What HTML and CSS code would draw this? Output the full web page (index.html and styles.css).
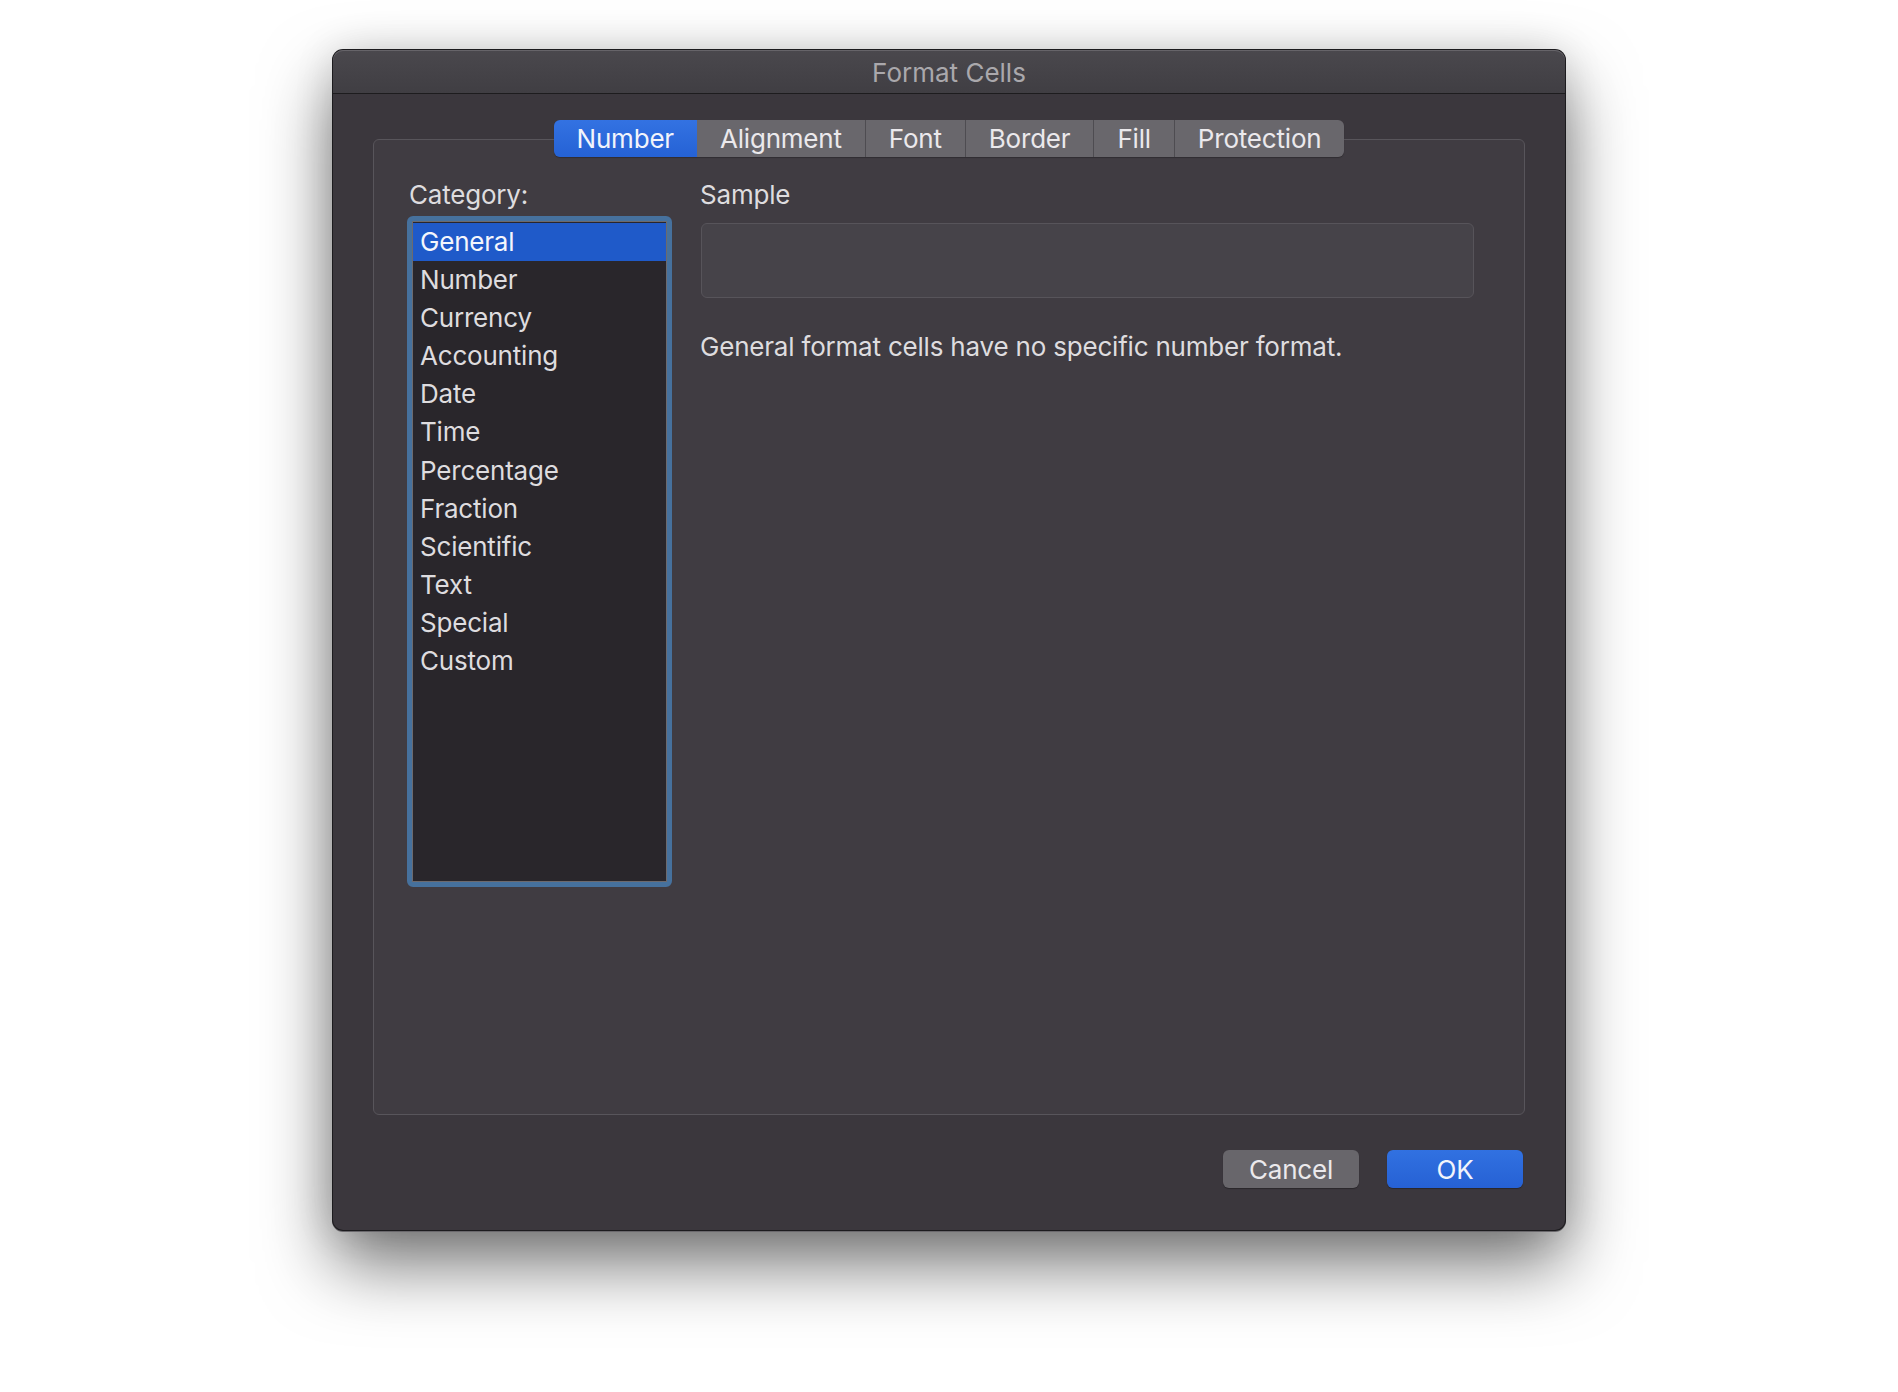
FILE: index.html
```html
<!DOCTYPE html>
<html lang="en">
<head>
    <meta charset="UTF-8">
    <title>Format Cells</title>
    <link rel="stylesheet" href="styles.css">
</head>
<body>
    <div class="window">
        <div class="titlebar">Format Cells</div>

        <div class="window-body">
            <div class="tabbar">
                <div class="tab active">Number</div>
                <div class="tab">Alignment</div>
                <div class="tab">Font</div>
                <div class="tab">Border</div>
                <div class="tab">Fill</div>
                <div class="tab">Protection</div>
            </div>

            <div class="group">
                <div class="col-left">
                    <div class="label">Category:</div>
                    <div class="list-frame">
                        <ul class="list">
                            <li class="selected">General</li>
                            <li>Number</li>
                            <li>Currency</li>
                            <li>Accounting</li>
                            <li>Date</li>
                            <li>Time</li>
                            <li>Percentage</li>
                            <li>Fraction</li>
                            <li>Scientific</li>
                            <li>Text</li>
                            <li>Special</li>
                            <li>Custom</li>
                        </ul>
                    </div>
                </div>

                <div class="col-right">
                    <div class="label">Sample</div>
                    <div class="sample"></div>
                    <p class="description">General format cells have no specific number format.</p>
                </div>
            </div>

            <div class="buttons">
                <button class="btn">Cancel</button>
                <button class="btn primary">OK</button>
            </div>
        </div>
    </div>
</body>
</html>
```

FILE: styles.css
```css
html, body {
    margin: 0;
    padding: 0;
}
body {
    background: #ffffff;
    font-family: Inter, "Noto Sans", sans-serif;
    font-size: 26px;
    letter-spacing: -0.2px;
    color: #dedcdf;
    width: 1898px;
    height: 1392px;
    overflow: hidden;
}
.window {
    width: 1232px;
    height: 1180px;
    margin: 50px auto 0;
    background: #3b373d;
    border-radius: 10px;
    box-shadow: 0 0 0 1px #1c1b1e, 0 1px 0 1px #6a686c, 0 34px 70px rgba(0,0,0,0.55), 0 0 40px rgba(0,0,0,0.12);
    display: flex;
    flex-direction: column;
    box-sizing: border-box;
}
.titlebar {
    height: 43px;
    line-height: 45px;
    text-align: center;
    font-size: 26px;
    letter-spacing: 0;
    color: #aaa8ac;
    background: linear-gradient(#4a484d, #403e43);
    border-bottom: 1px solid #1d1c1e;
    border-radius: 10px 10px 0 0;
    box-shadow: inset 0 1px 0 #666469;
}
.window-body {
    flex: 1;
    padding: 26px 40px 0;
    display: flex;
    flex-direction: column;
}
.tabbar {
    align-self: center;
    display: flex;
    height: 37px;
    position: relative;
    z-index: 1;
    border-radius: 6px;
    box-shadow: 0 1px 1px rgba(0,0,0,0.25);
}
.tab {
    padding: 0 23px;
    line-height: 37px;
    color: #ebe9ec;
    background: #69676c;
    border-left: 1px solid #4e4c51;
}
.tab:first-child {
    border-left: none;
    border-radius: 6px 0 0 6px;
}
.tab:last-child {
    border-radius: 0 6px 6px 0;
}
.tab.active {
    background: linear-gradient(#3372e2, #2562d5);
    color: #f2f4fb;
}
.tab.active + .tab {
    border-left: none;
}
.group {
    margin-top: -18px;
    height: 976px;
    box-sizing: border-box;
    border: 1px solid #58555b;
    border-radius: 6px;
    background: #403c42;
    padding: 39px 50px 0 35px;
    display: flex;
    gap: 28px;
}
.label {
    line-height: 32px;
    color: #dedcdf;
}
.col-left .label {
    margin-bottom: 5px;
}
.list-frame {
    width: 265px;
    height: 671px;
    margin-left: -2px;
    box-sizing: border-box;
    border: 5px solid #46719d;
    border-radius: 6px;
}
.list {
    list-style: none;
    margin: 0;
    padding: 1px 0 0;
    height: 100%;
    box-sizing: border-box;
    border: 1px solid #6c6a6e;
    background: #29262b;
}
.list li {
    height: 38.1px;
    line-height: 38.1px;
    padding-left: 7px;
    color: #dedcdf;
}
.list li.selected {
    background: #1f5ac9;
    color: #f4f6fc;
}
.col-right {
    flex: 1;
}
.sample {
    margin-top: 12px;
    height: 75px;
    box-sizing: border-box;
    border: 1px solid #57545a;
    border-radius: 6px;
    background: #464349;
    margin-left: 1px;
}
.description {
    margin: 33px 0 0;
    line-height: 32px;
}
.buttons {
    margin-top: 35px;
    display: flex;
    justify-content: flex-end;
    gap: 28px;
    padding-right: 2px;
}
.btn {
    width: 136px;
    height: 38px;
    border: none;
    border-radius: 6px;
    background: #68666b;
    color: #ebe9ec;
    font-family: inherit;
    font-size: 26px;
    letter-spacing: inherit;
    padding: 0;
    box-shadow: 0 1px 1px rgba(0,0,0,0.3);
}
.btn.primary {
    background: linear-gradient(#3171e1, #2661d4);
    color: #f2f4fb;
}
```
